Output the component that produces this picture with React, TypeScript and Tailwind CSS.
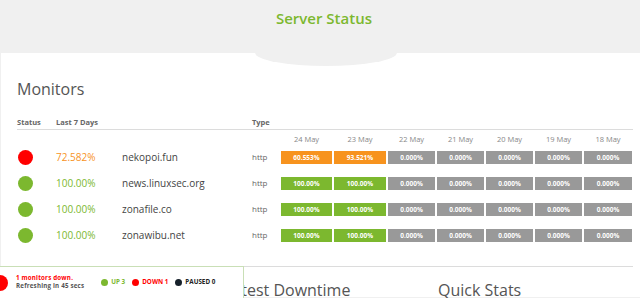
import React from "react";

const days = ["24 May", "23 May", "22 May", "21 May", "20 May", "19 May", "18 May"];
const widths = ["w-[51px]", "w-[52px]", "w-[47px]", "w-[47px]", "w-[47px]", "w-[47px]", "w-[48px]"];

type Row = { up: boolean; pct: string; name: string; bars: string[] };
const rows: Row[] = [
  { up: false, pct: "72.582%", name: "nekopoi.fun", bars: ["60.553%", "93.521%"] },
  { up: true, pct: "100.00%", name: "news.linuxsec.org", bars: ["100.00%", "100.00%"] },
  { up: true, pct: "100.00%", name: "zonafile.co", bars: ["100.00%", "100.00%"] },
  { up: true, pct: "100.00%", name: "zonawibu.net", bars: ["100.00%", "100.00%"] },
];

const font = { fontFamily: "'Open Sans', 'DejaVu Sans', sans-serif" };

export default function App() {
  return (
    <div className="relative w-[640px] h-[298px] overflow-hidden bg-[#f0f0f0]" style={font}>
      <div className="h-[53px] flex justify-center pl-[8px] pt-[6px]">
        <h1 className="text-[15px] leading-[24px] font-semibold text-[#7cb82f]">Server Status</h1>
      </div>
      <div className="relative ml-[1px] h-[244px] bg-white">
        <div className="absolute left-[254px] top-[-14px] w-[142px] h-[27px] bg-[#f0f0f0] rounded-[50%]" />
        <div className="pl-[16px] pr-[7px] pt-[26px]">
          <h2 className="text-[16px] leading-[20px] text-[#555]">Monitors</h2>
          <div className="mt-[16px] flex h-[15px] pt-[2px] items-start border-b border-[#dcdcdc] text-[7.5px] font-bold text-[#666] leading-[10px]">
            <div className="w-[39px] shrink-0">Status</div>
            <div className="w-[196px] shrink-0">Last 7 Days</div>
            <div>Type</div>
          </div>
          <div className="flex h-[14px] pt-[3px] pl-[264px] gap-[2px] text-[7.5px] leading-[12px] text-[#888]">
            {days.map((d, i) => (
              <div key={d} className={`${widths[i]} shrink-0 text-center`}>{d}</div>
            ))}
          </div>
          {rows.map((r) => (
            <div key={r.name} className="flex h-[26px] items-center">
              <div className="w-[39px] shrink-0 flex pl-[1px]">
                <div className={`w-[15px] h-[15px] rounded-full ${r.up ? "bg-[#7cb82f]" : "bg-[#ff0000]"}`} />
              </div>
              <div className={`w-[66px] shrink-0 text-[10px] ${r.up ? "text-[#7cb82f]" : "text-[#f7931e]"}`}>{r.pct}</div>
              <div className="w-[130px] shrink-0 text-[10px] text-[#444]">{r.name}</div>
              <div className="w-[29px] shrink-0 text-[8px] text-[#666]">http</div>
              <div className="flex gap-[2px] pt-[1px] shrink-0">
                {widths.map((w, i) => {
                  const val = i < 2 ? r.bars[i] : "0.000%";
                  const bg = i < 2 ? (r.up ? "bg-[#7cb82f]" : "bg-[#f7931e]") : "bg-[#999999]";
                  return (
                    <div key={i} className={`${w} shrink-0 h-[13px] ${bg} flex items-center justify-center text-white text-[6.5px] font-bold`}>
                      {val}
                    </div>
                  );
                })}
              </div>
            </div>
          ))}
          <div className="mt-[18px] border-t border-[#dcdcdc] flex pt-[13px] text-[16px] leading-[20px] text-[#555] whitespace-nowrap">
            <div className="w-[207px] shrink-0" />
            <div className="w-[214px] shrink-0">Latest Downtime</div>
            <div>Quick Stats</div>
          </div>
        </div>
      </div>
      <div className="absolute left-[-10px] top-[266px] w-[254px] h-[40px] bg-white border border-[#c9dfb6] flex items-start pt-[7px] whitespace-nowrap">
        <div className="w-[16px] h-[16px] rounded-full bg-[#ff0000] mt-[1px] ml-[1px] shrink-0" />
        <div className="ml-[8px] text-[6.2px] font-bold leading-[7.5px] tracking-[0.2px]">
          <div className="text-[#ff0000]">1 monitors down.</div>
          <div className="text-[#555]">Refreshing in 45 secs</div>
        </div>
        <div className="ml-[17px] mt-[4px] flex items-center text-[6.3px] font-bold leading-[8px]">
          <div className="w-[7px] h-[7px] rounded-full bg-[#7cb82f] shrink-0" />
          <span className="ml-[3px] text-[#7cb82f]">UP 3</span>
          <div className="ml-[7px] w-[7px] h-[7px] rounded-full bg-[#ff0000] shrink-0" />
          <span className="ml-[3px] text-[#ff0000]">DOWN 1</span>
          <div className="ml-[7px] w-[7px] h-[7px] rounded-full bg-[#17212b] shrink-0" />
          <span className="ml-[3px] text-[#222]">PAUSED 0</span>
        </div>
      </div>
    </div>
  );
}
